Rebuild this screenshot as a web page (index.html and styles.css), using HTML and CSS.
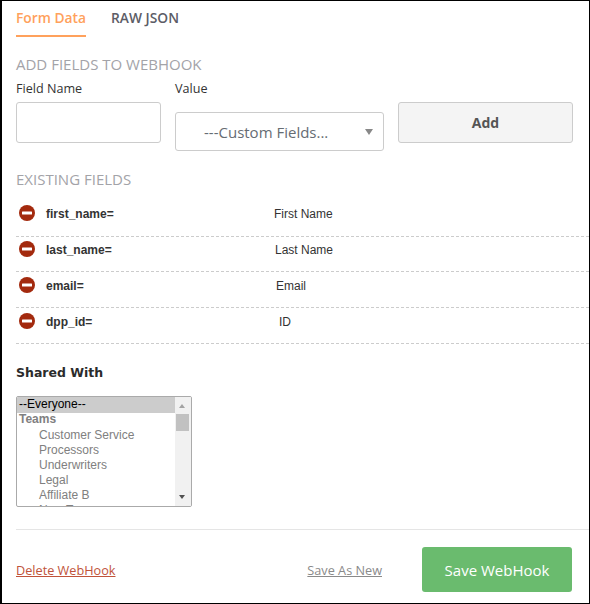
FILE: index.html
```html
<!DOCTYPE html>
<html lang="en">
<head>
<meta charset="utf-8">
<title>WebHook</title>
<link rel="stylesheet" href="styles.css">
</head>
<body>
<div class="frame">
  <nav class="tabs">
    <a class="tab active">Form Data</a>
    <a class="tab">RAW JSON</a>
  </nav>
  <h2 class="section add-title">ADD FIELDS TO WEBHOOK</h2>
  <div class="add-row">
    <div class="col-name">
      <label class="lbl">Field Name</label>
      <div class="input"></div>
    </div>
    <div class="col-value">
      <label class="lbl">Value</label>
      <div class="select"><span>---Custom Fields...</span><i class="caret"></i></div>
    </div>
    <button class="add-btn">Add</button>
  </div>
  <h2 class="section existing-title">EXISTING FIELDS</h2>
  <ul class="fields">
    <li class="field">
      <svg class="rm" viewBox="0 0 16 16"><circle cx="8" cy="8" r="8" fill="#a32a0e"/><rect x="3" y="6.5" width="10" height="3" rx=".5" fill="#fff"/></svg>
      <b class="key">first_name=</b><span class="val v1">First Name</span>
    </li>
    <li class="field">
      <svg class="rm" viewBox="0 0 16 16"><circle cx="8" cy="8" r="8" fill="#a32a0e"/><rect x="3" y="6.5" width="10" height="3" rx=".5" fill="#fff"/></svg>
      <b class="key">last_name=</b><span class="val v2">Last Name</span>
    </li>
    <li class="field">
      <svg class="rm" viewBox="0 0 16 16"><circle cx="8" cy="8" r="8" fill="#a32a0e"/><rect x="3" y="6.5" width="10" height="3" rx=".5" fill="#fff"/></svg>
      <b class="key">email=</b><span class="val v3">Email</span>
    </li>
    <li class="field">
      <svg class="rm" viewBox="0 0 16 16"><circle cx="8" cy="8" r="8" fill="#a32a0e"/><rect x="3" y="6.5" width="10" height="3" rx=".5" fill="#fff"/></svg>
      <b class="key">dpp_id=</b><span class="val v4">ID</span>
    </li>
  </ul>
  <h3 class="shared">Shared With</h3>
  <div class="listbox">
    <div class="options">
      <div class="opt selected">--Everyone--</div>
      <div class="opt group">Teams</div>
      <div class="opt sub">Customer Service</div>
      <div class="opt sub">Processors</div>
      <div class="opt sub">Underwriters</div>
      <div class="opt sub">Legal</div>
      <div class="opt sub">Affiliate B</div>
      <div class="opt sub">New Team</div>
    </div>
    <div class="scrollbar">
      <i class="arrow up"></i>
      <i class="thumb"></i>
      <i class="arrow down"></i>
    </div>
  </div>
  <footer class="foot">
    <a class="delete">Delete WebHook</a>
    <a class="save-new">Save As New</a>
    <button class="save">Save WebHook</button>
  </footer>
</div>
</body>
</html>
```
FILE: styles.css
```css
* { box-sizing: border-box; }
html, body { margin: 0; padding: 0; background: #fff; }
.frame {
  width: 590px; height: 604px;
  border: 1px solid #000;
  border-left-width: 2px;
  padding: 0 16px 0 14px;
  font-family: "Open Sans", sans-serif;
  overflow: hidden;
}
.tabs { display: flex; gap: 25px; height: 36px; padding-top: 6px; }
.tab { font-size: 13.8px; font-weight: 600; color: #5c5c66; line-height: 22px; height: 30px; }
.tab.active { color: #ffa15c; border-bottom: 2px solid #ffa15c; }
.section { margin: 0; font-size: 15px; font-weight: 400; color: #a3a3a8; line-height: 20px; }
.add-title { margin-top: 17px; }
.add-row { display: flex; margin-top: 7px; align-items: flex-start; }
.lbl { display: block; font-size: 12.6px; font-weight: 500; color: #333; line-height: 16px; }
.col-name { width: 145px; }
.input { height: 41px; margin-top: 5px; border: 1px solid #ccc; border-radius: 3px; background: #fff; }
.col-value { width: 209px; margin-left: 14px; }
.select {
  height: 39px; margin-top: 15px; border: 1px solid #ccc; border-radius: 3px; position: relative;
  padding-left: 28px; font-size: 15px; line-height: 38px; color: #666c73;
}
.caret {
  position: absolute; right: 10px; top: 16px; width: 0; height: 0;
  border-left: 4px solid transparent; border-right: 4px solid transparent; border-top: 6px solid #888;
}
.add-btn {
  width: 175px; height: 41px; margin: 21px 0 0 14px; border: 1px solid #ccc; border-radius: 3px;
  background: #f4f4f4; font: 700 14px "Open Sans", sans-serif; color: #555;
}
.existing-title { margin-top: 18px; }
.fields { list-style: none; margin: 11px -16px 0 0; padding: 0; }
.field {
  height: 36px; display: flex; align-items: flex-start; padding: 5px 0 0 3px;
  border-bottom: 1px dashed #ccc; font-family: "Liberation Sans", Arial, sans-serif; font-size: 12px; line-height: 18px; color: #333;
}
.field:first-child { height: 37px; }
.field:nth-child(2) { height: 35px; padding-top: 4px; }
.rm { width: 16px; height: 16px; flex: none; }
.key { margin-left: 11px; font-weight: 700; width: 228px; }
.val.v2 { margin-left: 1px; }
.val.v3 { margin-left: 2px; }
.val.v4 { margin-left: 5px; }
.shared {
  margin: 20px 0 0; font: 700 12.5px/18px "DejaVu Sans", sans-serif; color: #2b2b2b;
}
.listbox {
  display: flex; width: 176px; height: 111px; margin-top: 14px; overflow: hidden;
  border: 1px solid #aaa; border-radius: 2px; font-family: "Liberation Sans", Arial, sans-serif; font-size: 12px;
}
.options { flex: 1; height: 109px; overflow: hidden; }
.opt { height: 15px; line-height: 15px; padding-left: 2px; color: #808080; white-space: nowrap; }
.opt.selected { background: #ccc; color: #000; height: 16px; line-height: 14px; }
.opt.group { font-weight: 700; padding-left: 2px; line-height: 13px; }
.opt.sub { padding-left: 22px; }
.scrollbar { width: 16px; background: #f1f1f1; position: relative; flex: none; }
.arrow { position: absolute; left: 4px; width: 0; height: 0; border-left: 3.5px solid transparent; border-right: 3.5px solid transparent; }
.arrow.up { top: 7px; border-bottom: 4px solid #a3a3a3; }
.arrow.down { bottom: 7px; border-top: 4px solid #505050; }
.thumb { position: absolute; left: 1px; top: 17px; width: 13px; height: 17px; background: #c1c1c1; }
.foot {
  display: flex; align-items: center; margin: 22px -16px 0 0; padding: 17px 17px 0 0; border-top: 1px solid #e5e5e5; height: 63px;
}
.foot a { font-size: 12.7px; line-height: 18px; text-decoration: underline; white-space: nowrap; }
.delete { color: #c0533a; }
.save-new { color: #8a8a8a; margin-left: auto; }
.save {
  flex: none; width: 150px; height: 45px; margin-left: 40px; border: 0; border-radius: 3px;
  background: #6abb6e; color: #fff; font: 400 15px "Open Sans", sans-serif;
}
```
